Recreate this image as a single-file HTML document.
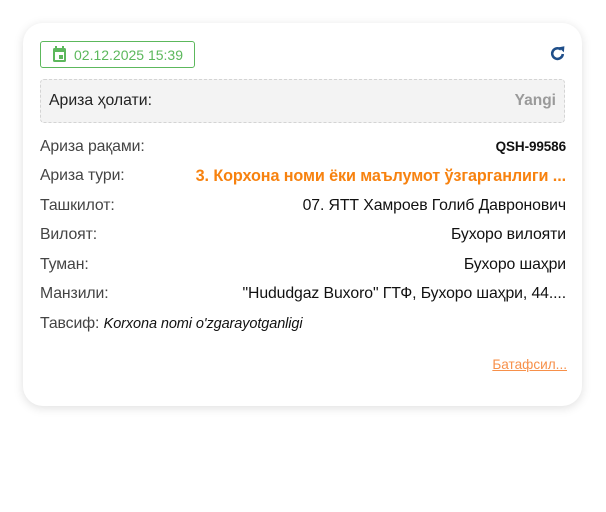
<!DOCTYPE html>
<html><head><meta charset="utf-8"><style>
body{margin:0;background:#fff;font-family:"Liberation Sans",Arial,sans-serif;width:606px;height:512px;position:relative;overflow:hidden}
.card{position:absolute;left:23px;top:23px;width:559px;height:383px;border-radius:20px;background:#fff;box-shadow:0 2px 10px rgba(0,0,0,.13)}
.badge{position:absolute;left:40px;top:41px;width:155px;height:27px;border:1px solid #5cb85c;border-radius:3px;box-sizing:border-box}
.badge span{position:absolute;left:33px;top:5px;font-size:14px;color:#5cb85c}
.status{position:absolute;left:40px;top:79px;width:525px;height:44px;box-sizing:border-box;border:1px dashed #d4d4d4;border-radius:4px;background:#f3f3f3}
.row{position:absolute;left:40px;width:526px;font-size:15.8px;color:#444;height:18px;line-height:18px;letter-spacing:-0.1px}
.row .v{position:absolute;right:0;top:0;color:#111;white-space:nowrap}
</style></head><body>
<div class="card"></div>
<div class="badge">
<svg style="position:absolute;left:11px;top:4px" width="15" height="17" viewBox="0 0 15 17"><rect x="3" y="0" width="2" height="3" fill="#5cb85c"/><rect x="10" y="0" width="2" height="3" fill="#5cb85c"/><rect x="1" y="2" width="13" height="14" rx="1.5" fill="#5cb85c"/><rect x="3" y="6" width="9" height="8" fill="#fff"/><rect x="7" y="9" width="4" height="4" fill="#5cb85c"/></svg>
<span>02.12.2025 15:39</span></div>
<svg style="position:absolute;left:549px;top:45px" width="17" height="17" viewBox="0 0 16 16"><path d="M13 8.5A5 5 0 1 1 11.3 4.3" fill="none" stroke="#1f4e89" stroke-width="2.4"/><path d="M9 2.2L14.5 1.2L14 6.8Z" fill="#1f4e89"/></svg>
<div class="status"><span style="position:absolute;left:8px;top:12px;font-size:15.8px;color:#222">Ариза ҳолати:</span><span style="position:absolute;right:8px;top:12px;font-size:15.5px;color:#9a9a9a;font-weight:bold">Yangi</span></div>
<div class="row" style="top:138px">Ариза рақами:<span class="v" style="font-weight:bold;font-size:13.5px">QSH-99586</span></div>
<div class="row" style="top:167px">Ариза тури:<span class="v" style="font-weight:bold;color:#f7820f;font-size:16.2px">3. Корхона номи ёки маълумот ўзгарганлиги ...</span></div>
<div class="row" style="top:197px">Ташкилот:<span class="v">07. ЯТТ Хамроев Голиб Давронович</span></div>
<div class="row" style="top:226px">Вилоят:<span class="v">Бухоро вилояти</span></div>
<div class="row" style="top:256px">Туман:<span class="v">Бухоро шаҳри</span></div>
<div class="row" style="top:285px">Манзили:<span class="v">"Hududgaz Buxoro" ГТФ, Бухоро шаҳри, 44....</span></div>
<div class="row" style="top:315px">Тавсиф: <i style="color:#111;font-size:14.5px">Korxona nomi o'zgarayotganligi</i></div>
<div style="position:absolute;right:39px;top:357px;font-size:13.6px;color:#f7904a;text-decoration:underline">Батафсил...</div>
</body></html>
